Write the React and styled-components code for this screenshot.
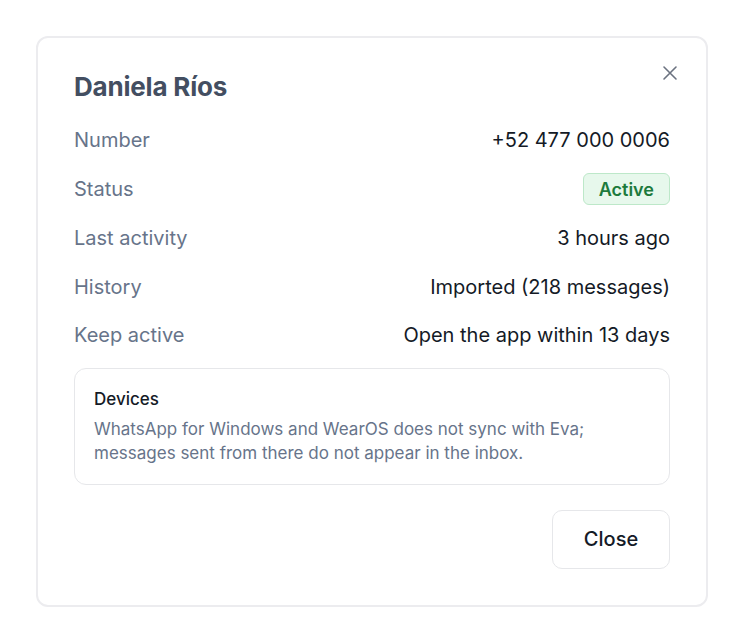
import React from "react";
import styled, { createGlobalStyle } from "styled-components";

const GlobalStyle = createGlobalStyle`
  * { box-sizing: border-box; }
  body {
    margin: 0;
    background: #ffffff;
    font-family: Inter, "Noto Sans", sans-serif;
  }
`;

const Page = styled.div`
  padding: 36px;
`;

const Dialog = styled.div`
  position: relative;
  width: 672px;
  border: 2px solid #ececef;
  border-radius: 12px;
  background: #ffffff;
  padding: 32px 36px 36px;
`;

const Title = styled.h2`
  margin: 0 0 12px;
  font-size: 26px;
  line-height: 34px;
  font-weight: 700;
  color: #434e61;
  letter-spacing: -0.2px;
`;

const CloseIcon = styled.button`
  position: absolute;
  top: 25px;
  right: 26px;
  width: 20px;
  height: 20px;
  padding: 0;
  border: none;
  background: none;
  color: #6b7280;
  display: flex;
  align-items: center;
  justify-content: center;
`;

const Rows = styled.div`
  display: flex;
  flex-direction: column;
`;

const Row = styled.div`
  display: flex;
  align-items: center;
  justify-content: space-between;
  height: 48.75px;
`;

const Label = styled.span`
  font-size: 20px;
  color: #67748a;
`;

const Value = styled.span`
  font-size: 20px;
  color: #141a26;
`;

const Badge = styled.span`
  display: inline-flex;
  align-items: center;
  height: 32px;
  padding: 0 15px;
  border: 1.5px solid #bde8c9;
  border-radius: 6px;
  background: #e7f8ec;
  color: #1d7a3c;
  font-size: 18px;
  font-weight: 600;
`;

const Note = styled.div`
  margin-top: 8px;
  border: 1.5px solid #e6e7ea;
  border-radius: 12px;
  padding: 18px 19px 18px;
`;

const NoteTitle = styled.div`
  font-size: 17px;
  line-height: 24px;
  font-weight: 500;
  color: #151b27;
  margin-bottom: 6px;
`;

const NoteText = styled.p`
  margin: 0;
  font-size: 17px;
  line-height: 24.5px;
  color: #67748a;
`;

const Footer = styled.div`
  display: flex;
  justify-content: flex-end;
  margin-top: 25px;
`;

const Button = styled.button`
  width: 118px;
  height: 59px;
  border: 1.5px solid #e6e7ea;
  border-radius: 10px;
  background: #ffffff;
  font-family: inherit;
  font-size: 20px;
  font-weight: 500;
  color: #151b27;
`;

const details = [
  { label: "Number", value: "+52 477 000 0006" },
  { label: "Status", badge: "Active" },
  { label: "Last activity", value: "3 hours ago" },
  { label: "History", value: "Imported (218 messages)" },
  { label: "Keep active", value: "Open the app within 13 days" },
];

export default function App() {
  return (
    <>
      <GlobalStyle />
      <Page>
        <Dialog>
          <CloseIcon aria-label="Close">
            <svg width="16" height="16" viewBox="0 0 16 16" fill="none">
              <path
                d="M2 2L14 14M14 2L2 14"
                stroke="currentColor"
                strokeWidth="1.6"
                strokeLinecap="round"
              />
            </svg>
          </CloseIcon>
          <Title>Daniela Ríos</Title>
          <Rows>
            {details.map((d) => (
              <Row key={d.label}>
                <Label>{d.label}</Label>
                {d.badge ? <Badge>{d.badge}</Badge> : <Value>{d.value}</Value>}
              </Row>
            ))}
          </Rows>
          <Note>
            <NoteTitle>Devices</NoteTitle>
            <NoteText>
              WhatsApp for Windows and WearOS does not sync with Eva;
              <br />
              messages sent from there do not appear in the inbox.
            </NoteText>
          </Note>
          <Footer>
            <Button>Close</Button>
          </Footer>
        </Dialog>
      </Page>
    </>
  );
}
